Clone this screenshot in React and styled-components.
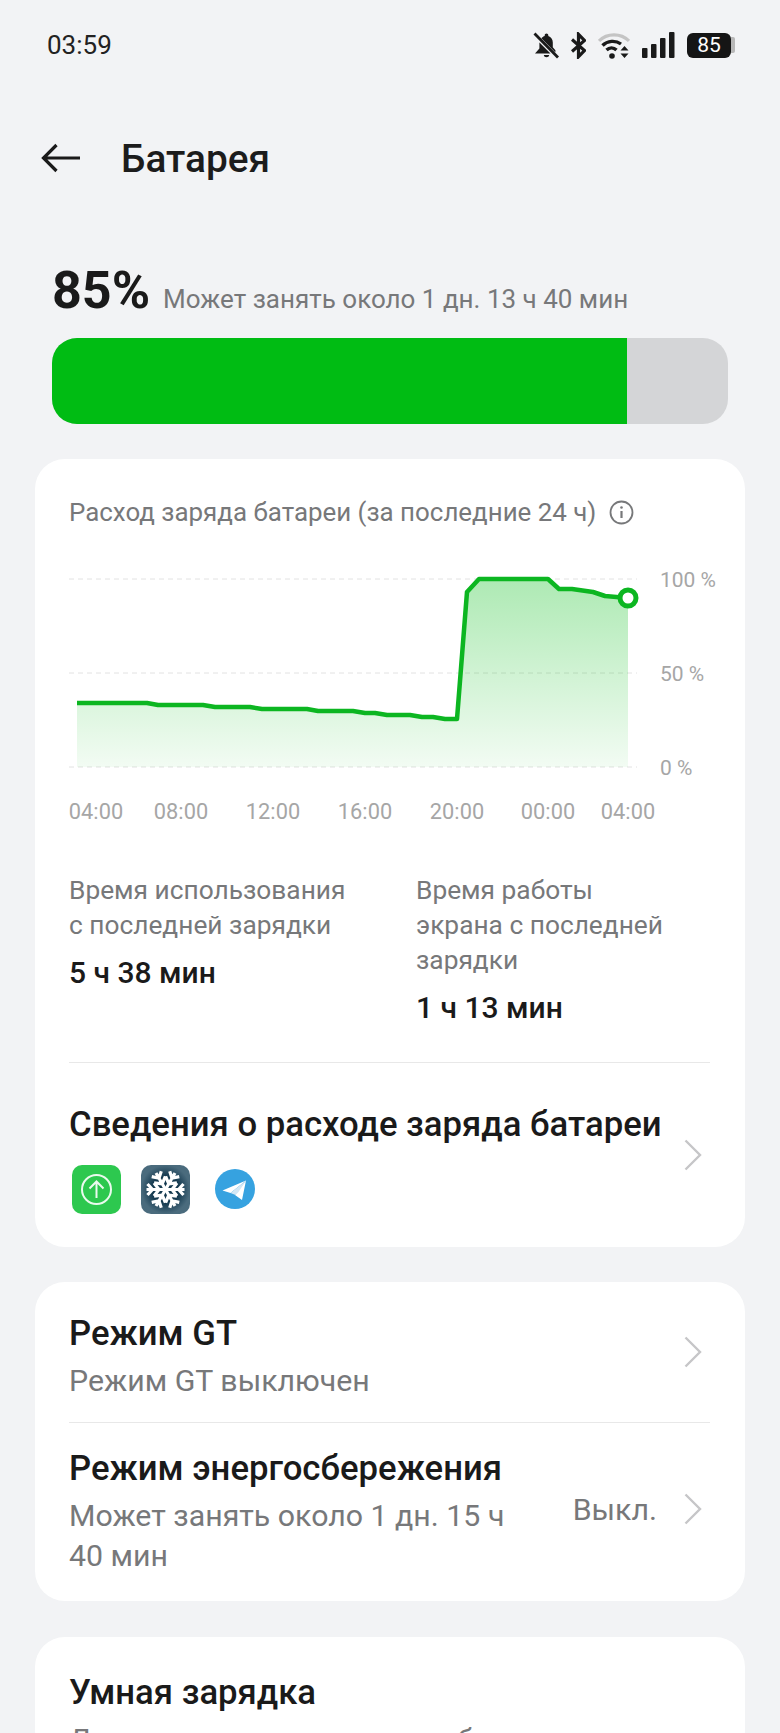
import React from "react"
import styled, { createGlobalStyle } from "styled-components"

const GlobalStyle = createGlobalStyle`
  html, body {
    margin: 0;
    padding: 0;
    background: #f2f3f5;
    font-family: Roboto, "Noto Sans", sans-serif;
    color: #1a1a1a;
    overflow: hidden;
  }
`

const Page = styled.div`
  width: 780px;
  height: 1733px;
  overflow: hidden;
  background: #f2f3f5;
`

const StatusBar = styled.div`
  height: 90px;
  padding: 0 45px 0 47px;
  display: flex;
  align-items: center;
  justify-content: space-between;
  box-sizing: border-box;
`

const Time = styled.span`
  font-size: 26px;
  color: #222;
`

const StatusIcons = styled.div`
  display: flex;
  align-items: center;
  gap: 12px;
`

const BatteryBody = styled.span`
  width: 44px;
  height: 25px;
  border-radius: 6px;
  background: #151515;
  color: #fff;
  font-size: 21px;
  display: flex;
  align-items: center;
  justify-content: center;
`

const BatteryWrap = styled.span`
  display: flex;
  align-items: center;
`

const BatteryCap = styled.span`
  width: 4px;
  height: 16px;
  background: #b8b8b8;
  border-radius: 0 2px 2px 0;
`

const Header = styled.div`
  height: 68px;
  margin-top: 34px;
  padding-left: 41px;
  display: flex;
  align-items: center;
  gap: 41px;
`

const Title = styled.h1`
  margin: 0;
  font-size: 38.8px;
  font-weight: 500;
  color: #1c1c1c;
`

const Summary = styled.div`
  margin-top: 68px;
  padding: 0 52px;
`

const SummaryLine = styled.div`
  display: flex;
  align-items: baseline;
  gap: 13px;
  height: 64px;
`

const Percent = styled.span`
  font-size: 52px;
  font-weight: 700;
  color: #1a1a1a;
`

const Estimate = styled.span`
  font-size: 26px;
  color: #77787a;
`

const Track = styled.div`
  height: 86px;
  margin-top: 14px;
  border-radius: 25px;
  background: #d4d5d7;
  overflow: hidden;
`

const Fill = styled.div`
  height: 100%;
  background: #00bc13;
`

const Card = styled.section`
  margin: ${p => p.$top}px 35px 0;
  padding: ${p => p.$pad || "0 35px 0 34px"};
  background: #fff;
  border-radius: 30px;
`

const CardHeading = styled.div`
  height: 36px;
  padding-top: 35px;
  display: flex;
  align-items: center;
  gap: 13px;
  font-size: 25.9px;
  color: #77787a;
`

const ChartBox = styled.div`
  display: block;
  margin: 22px -35px 0 -34px;
`

const Stats = styled.div`
  display: grid;
  grid-template-columns: 347px 1fr;
  margin-top: 43px;
  padding-bottom: 37px;
  border-bottom: 1px solid #e8e8e8;
`

const StatLabel = styled.div`
  font-size: 26.3px;
  line-height: 35px;
  color: #77787a;
`

const StatValue = styled.div`
  font-size: 30px;
  font-weight: 500;
  line-height: 35px;
  margin-top: 12px;
  color: #1a1a1a;
`

const Row = styled.div`
  display: flex;
  align-items: center;
  justify-content: space-between;
  border-bottom: ${p => (p.$divider ? "1px solid #e8e8e8" : "none")};
  height: ${p => p.$height}px;
  padding-bottom: ${p => p.$raise || 0}px;
  box-sizing: border-box;
`

const RowMain = styled.div`
  flex: 1;
  min-width: 0;
  padding-top: ${p => p.$shift || 0}px;
`

const RowTitle = styled.div`
  font-size: 34.7px;
  font-weight: 500;
  line-height: 40px;
  color: #1a1a1a;
  white-space: nowrap;
`

const RowText = styled.div`
  max-width: 450px;
  margin-top: 8px;
  font-size: 30.3px;
  line-height: 40px;
  color: #77787a;
`

const RowValue = styled.span`
  font-size: 30.3px;
  color: #77787a;
  margin-right: 27px;
`

const AppIcons = styled.div`
  display: flex;
  align-items: center;
  margin: 21px 0 -7px;
`

const AppIcon = styled.svg`
  display: block;
  margin-left: ${p => p.$left}px;
`

const ChevronIcon = styled.svg`
  flex-shrink: 0;
  margin-right: 8px;
`

const Chevron = () => (
  <ChevronIcon width="18" height="32" viewBox="0 0 18 32" fill="none" stroke="#c6c6c8" strokeWidth="2.4">
    <path d="M1.500 1.500L16 16 1.500 30.500" />
  </ChevronIcon>
)

const BellOff = () => (
  <svg width="26" height="27" viewBox="0 0 26 27">
    <path fill="#1a1a1a" d="M13.500 1.500c-1 0-1.800.8-1.800 1.800v.6c-1.300.4-2.500 1.200-3.300 2.300l14 14.300v-2.300l-2.600-3v-4.800c0-3.100-1.700-5.700-4.500-6.500v-.6c0-1-.8-1.800-1.800-1.800zM6.500 10.500c-.1.400-.1.800-.1 1.200v4.800L2 21.500h15.500zM10.800 23c.2 1.300 1.300 2.300 2.700 2.300s2.500-1 2.700-2.300z" />
    <path stroke="#1a1a1a" strokeWidth="2.800" d="M1.500 1.500l23.500 24" />
  </svg>
)

const Bluetooth = () => (
  <svg width="15" height="27" viewBox="0 0 15 27" fill="none" stroke="#1a1a1a" strokeWidth="3.200">
    <path d="M1 7.500l12.500 11-6 6.200V2.300l6 6.200L1 19.500" />
  </svg>
)

const Wifi = () => (
  <svg width="32" height="27" viewBox="0 0 32 27" fill="none">
    <path stroke="#c4c4c4" strokeWidth="3.200" d="M1 9C9 .8 23 .8 31 9" />
    <path stroke="#1a1a1a" strokeWidth="3.400" d="M4.500 13.500c5-5 13-5.500 18.500-1.500" />
    <path stroke="#1a1a1a" strokeWidth="3.400" d="M8.500 18c3-2.800 7-2.800 10 0" />
    <circle cx="14" cy="24" r="2.800" fill="#1a1a1a" />
    <path fill="#1a1a1a" d="M26.500 14l4 4.500h-8zM26.500 26l4-4.500h-8z" />
  </svg>
)

const Signal = () => (
  <svg width="33" height="26" viewBox="0 0 33 26" fill="#1a1a1a">
    <rect x="0" y="16" width="5.500" height="10" rx="1" />
    <rect x="9" y="12" width="5.500" height="14" rx="1" />
    <rect x="18" y="6" width="5.500" height="20" rx="1" />
    <rect x="27" y="0" width="5.500" height="26" rx="1" />
  </svg>
)

const InfoIcon = () => (
  <svg width="25" height="25" viewBox="0 0 25 25" fill="none" stroke="#77787a" strokeWidth="1.800">
    <circle cx="12.500" cy="12.500" r="11" />
    <path d="M12.500 11v7" strokeWidth="2.200" />
    <circle cx="12.500" cy="7.500" r="1.300" fill="#77787a" stroke="none" />
  </svg>
)

const BackArrow = () => (
  <svg width="39" height="30" viewBox="0 0 39 30" fill="none" stroke="#1a1a1a" strokeWidth="3.200">
    <path d="M39 15H3M15.500 2L2.500 15l13 13" />
  </svg>
)

const linePoints = [
  [77, 703], [147, 703], [158, 705], [203, 705], [215, 707], [250, 707], [262, 709], [307, 709],
  [318, 711], [353, 711], [365, 713], [375, 713], [387, 715], [410, 715], [422, 717], [433, 717],
  [445, 719], [457, 719], [467, 592], [479, 579], [548, 579], [559, 589], [572, 589], [593, 592],
  [605, 596], [628, 598],
]

const xLabels = [
  ["04:00", 96], ["08:00", 181], ["12:00", 273], ["16:00", 365], ["20:00", 457], ["00:00", 548], ["04:00", 628],
]

const yLabels = [["100 %", 579], ["50 %", 673], ["0 %", 767]]

// chart svg starts at x=35, y=552 of the page
const Chart = () => {
  const pts = linePoints.map(([x, y]) => `${x - 35},${y - 552}`).join(" ")
  return (
    <svg width="710" height="278" style={{ display: "block" }}>
      <defs>
        <linearGradient id="area" x1="0" y1="0" x2="0" y2="1">
          <stop offset="0" stopColor="#00bc13" stopOpacity="0.32" />
          <stop offset="1" stopColor="#00bc13" stopOpacity="0.05" />
        </linearGradient>
      </defs>
      {yLabels.map(([t, y]) => (
        <line key={t} x1="34" x2="602" y1={y - 552} y2={y - 552} stroke="#e2e2e2" strokeWidth="1" strokeDasharray="5 4" />
      ))}
      <polygon points={`42,${767 - 552} ${pts} 593,${767 - 552}`} fill="url(#area)" />
      <polyline points={pts} fill="none" stroke="#0cb621" strokeWidth="4.500" strokeLinejoin="round" />
      <circle cx="593" cy="46" r="8" fill="#fff" stroke="#0cb621" strokeWidth="5" />
      {yLabels.map(([t, y]) => (
        <text key={t} x="625" y={y - 552 + 8} fontFamily="Roboto, sans-serif" fontSize="21" fill="#a6a6a6">{t}</text>
      ))}
      {xLabels.map(([t, x], i) => (
        <text key={i} x={x - 35} y={812 - 552 + 7} textAnchor="middle" fontFamily="Roboto, sans-serif" fontSize="21.800" fill="#a6a6a6">{t}</text>
      ))}
    </svg>
  )
}

const UploadApp = () => (
  <AppIcon $left={3} width="49" height="49" viewBox="0 0 49 49">
    <rect width="49" height="49" rx="10" fill="#2dc84f" />
    <circle cx="24.500" cy="24.500" r="14.500" fill="none" stroke="#fff" strokeWidth="2" opacity="0.9" />
    <path d="M24.500 33V17M17.500 23.500l7-7 7 7" fill="none" stroke="#fff" strokeWidth="2" opacity="0.9" />
  </AppIcon>
)

const snowArm = "M24.500 24.500V5.500M24.500 11.500l-5.500-5M24.500 11.500l5.500-5M24.500 18l-6.500-5M24.500 18l6.500-5"

const SnowApp = () => (
  <AppIcon $left={20} width="49" height="49" viewBox="0 0 49 49">
    <defs>
      <radialGradient id="snowBg">
        <stop offset="0.55" stopColor="#14394f" />
        <stop offset="1" stopColor="#4a6b7d" />
      </radialGradient>
    </defs>
    <rect width="49" height="49" rx="10" fill="url(#snowBg)" />
    {[30, 90, 150, 210, 270, 330].map(a => (
      <path key={a} d={snowArm} transform={`rotate(${a} 24.500 24.500)`} fill="none" stroke="#fff" strokeWidth="3.200" />
    ))}
  </AppIcon>
)

const TelegramApp = () => (
  <AppIcon $left={25} width="40" height="40" viewBox="0 0 40 40">
    <circle cx="20" cy="20" r="20" fill="#36a2e0" />
    <path fill="#fff" d="M7.500 21.500 31 11.500 27 31 20 26 31 11.500 15.500 24z" />
    <path fill="#d2e7f5" d="M15.500 24l5 2 3-3 7.500-11.500z" />
  </AppIcon>
)

export default function App() {
  return (
    <Page>
      <GlobalStyle />
      <StatusBar>
        <Time>03:59</Time>
        <StatusIcons>
          <BellOff />
          <Bluetooth />
          <Wifi />
          <Signal />
          <BatteryWrap>
            <BatteryBody>85</BatteryBody>
            <BatteryCap />
          </BatteryWrap>
        </StatusIcons>
      </StatusBar>

      <Header>
        <BackArrow />
        <Title>Батарея</Title>
      </Header>

      <Summary>
        <SummaryLine>
          <Percent>85%</Percent>
          <Estimate>Может занять около 1 дн. 13 ч 40 мин</Estimate>
        </SummaryLine>
        <Track>
          <Fill style={{ width: "85%" }} />
        </Track>
      </Summary>

      <Card $top={35}>
        <CardHeading>
          Расход заряда батареи (за последние 24 ч)
          <InfoIcon />
        </CardHeading>
        <ChartBox>
          <Chart />
        </ChartBox>
        <Stats>
          <div>
            <StatLabel>Время использования<br />с последней зарядки</StatLabel>
            <StatValue>5 ч 38 мин</StatValue>
          </div>
          <div>
            <StatLabel>Время работы<br />экрана с последней<br />зарядки</StatLabel>
            <StatValue>1 ч 13 мин</StatValue>
          </div>
        </Stats>
        <Row $height={184}>
          <RowMain>
            <RowTitle>Сведения о расходе заряда батареи</RowTitle>
            <AppIcons>
              <UploadApp />
              <SnowApp />
              <TelegramApp />
            </AppIcons>
          </RowMain>
          <Chevron />
        </Row>
      </Card>

      <Card $top={35}>
        <Row $height={141} $divider>
          <RowMain $shift={10}>
            <RowTitle>Режим GT</RowTitle>
            <RowText>Режим GT выключен</RowText>
          </RowMain>
          <Chevron />
        </Row>
        <Row $height={178} $raise={6}>
          <RowMain $shift={6}>
            <RowTitle>Режим энергосбережения</RowTitle>
            <RowText>Может занять около 1 дн. 15 ч 40 мин</RowText>
          </RowMain>
          <RowValue>Выкл.</RowValue>
          <Chevron />
        </Row>
      </Card>

      <Card $top={36} $pad="35px 35px 0 34px">
        <RowTitle>Умная зарядка</RowTitle>
        <RowText>Для продления срока службы</RowText>
      </Card>
    </Page>
  )
}
